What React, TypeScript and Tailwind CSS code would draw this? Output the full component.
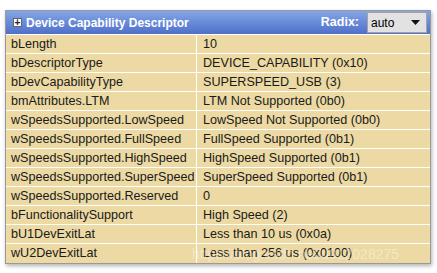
const rows: [string, string][] = [
  ["bLength", "10"],
  ["bDescriptorType", "DEVICE_CAPABILITY (0x10)"],
  ["bDevCapabilityType", "SUPERSPEED_USB (3)"],
  ["bmAttributes.LTM", "LTM Not Supported (0b0)"],
  ["wSpeedsSupported.LowSpeed", "LowSpeed Not Supported (0b0)"],
  ["wSpeedsSupported.FullSpeed", "FullSpeed Supported (0b1)"],
  ["wSpeedsSupported.HighSpeed", "HighSpeed Supported (0b1)"],
  ["wSpeedsSupported.SuperSpeed", "SuperSpeed Supported (0b1)"],
  ["wSpeedsSupported.Reserved", "0"],
  ["bFunctionalitySupport", "High Speed (2)"],
  ["bU1DevExitLat", "Less than 10 us (0x0a)"],
  ["wU2DevExitLat", "Less than 256 us (0x0100)"],
];

export default function App() {
  return (
    <div className="w-[437px] h-[273px] bg-white pt-[10px] pl-[5px] font-['Liberation_Sans',Arial,sans-serif]">
      <div className="relative w-[426px] border border-[#9a9a9a] shadow-[1px_2px_4px_rgba(0,0,0,0.3)] overflow-hidden">
        {/* header */}
        <div className="h-[24px] flex items-center bg-gradient-to-b from-[#84a6e6] to-[#4f6fc9] border-b border-white">
          <span className="ml-[7px] w-[9px] h-[9px] bg-white border border-[#666] flex items-center justify-center text-[#222] text-[10px] leading-none font-bold">
            +
          </span>
          <span className="ml-[4px] text-white font-bold text-[12px]">Device Capability Descriptor</span>
          <span className="ml-auto text-white font-bold text-[12.5px]">Radix:</span>
          <div className="ml-[8px] mr-[3px] w-[60px] h-[21px] bg-[#e2e2e2] border border-[#a3a3a3] flex items-center pl-[3px] pr-[6px]">
            <span className="text-[12px] text-black">auto</span>
            <svg className="ml-auto" width="9" height="5" viewBox="0 0 9 5">
              <path d="M0 0H9L4.5 5Z" fill="#111" />
            </svg>
          </div>
        </div>
        {/* rows */}
        <div className="bg-[#ecd9a3]">
          {rows.map(([k, v], i) => (
            <div
              key={k}
              className={`flex h-[19px] text-[12.6px] text-[#1a1a1a] ${i < rows.length - 1 ? "border-b border-white" : ""}`}
            >
              <div className="w-[191px] shrink-0 pl-[5px] border-r border-white flex items-center whitespace-nowrap">{k}</div>
              <div className="pl-[6px] flex items-center whitespace-nowrap">{v}</div>
            </div>
          ))}
        </div>
        <div className="absolute left-[186px] bottom-[2px] text-[14px] text-white/40 pointer-events-none whitespace-nowrap leading-none">
          https://blog.csdn.net/u012028275
        </div>
      </div>
    </div>
  );
}
